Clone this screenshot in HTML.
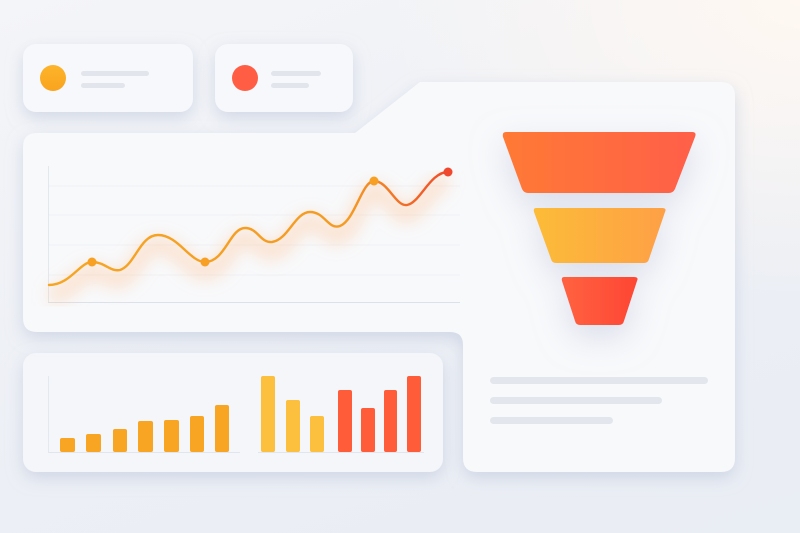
<!DOCTYPE html>
<html><head><style>
html,body{margin:0;padding:0;width:800px;height:533px;overflow:hidden}
body{background:radial-gradient(ellipse 420px 300px at 800px 0px,#fff8f2 0%,rgba(255,248,242,0) 100%),linear-gradient(160deg,#f4f5f8 0%,#eceff5 60%,#e9edf4 100%)}
svg{position:absolute;left:0;top:0}
</style></head><body>
<svg width="800" height="533" viewBox="0 0 800 533">
<defs>
<filter id="sh" x="-20%" y="-20%" width="140%" height="150%"><feDropShadow dx="0" dy="6" stdDeviation="8" flood-color="#b8c3d8" flood-opacity="0.55"/></filter>
<filter id="fs" x="-50%" y="-50%" width="200%" height="200%"><feDropShadow dx="0" dy="12" stdDeviation="16" flood-color="#c8cbe0" flood-opacity="0.6"/></filter>
<filter id="bl"><feGaussianBlur stdDeviation="8"/></filter>
<linearGradient id="lg" x1="0" x2="1"><stop offset="0" stop-color="#f6a623"/><stop offset="0.75" stop-color="#f59a22"/><stop offset="1" stop-color="#f04a2a"/></linearGradient>
<linearGradient id="f1" x1="0" x2="1"><stop offset="0" stop-color="#ff7a35"/><stop offset="1" stop-color="#ff5f48"/></linearGradient>
<linearGradient id="f2" x1="0" x2="1"><stop offset="0" stop-color="#fcbc38"/><stop offset="1" stop-color="#fea046"/></linearGradient>
<linearGradient id="f3" x1="0" x2="1"><stop offset="0" stop-color="#ff6240"/><stop offset="1" stop-color="#fe4634"/></linearGradient>
<linearGradient id="c1" x1="0" y1="0" x2="0" y2="1"><stop offset="0" stop-color="#fdb42b"/><stop offset="1" stop-color="#f9a41e"/></linearGradient>
</defs>
<rect x="23" y="44" width="170" height="68" rx="13" fill="#f7f8fb" filter="url(#sh)"/>
<rect x="215" y="44" width="138" height="68" rx="13" fill="#f7f8fb" filter="url(#sh)"/>
<circle cx="53" cy="78" r="13" fill="url(#c1)"/>
<rect x="81" y="71" width="68" height="5" rx="2.5" fill="#e2e5ec"/>
<rect x="81" y="83" width="44" height="5" rx="2.5" fill="#e2e5ec"/>
<circle cx="245" cy="78" r="13" fill="#ff5e45"/>
<rect x="271" y="71" width="50" height="5" rx="2.5" fill="#e2e5ec"/>
<rect x="271" y="83" width="38" height="5" rx="2.5" fill="#e2e5ec"/>
<rect x="23" y="353" width="420" height="119" rx="13" fill="#f5f6fa" filter="url(#sh)"/>
<path d="M37 133 L355 133 L420 82 L721 82 Q735 82 735 96 L735 458 Q735 472 721 472 L477 472 Q463 472 463 458 L463 345 Q463 332 450 332 L37 332 Q23 332 23 318 L23 147 Q23 133 37 133 Z" fill="#f8f9fb" filter="url(#sh)"/>
<g stroke="#f0f1f5" stroke-width="1">
<line x1="48" y1="186" x2="460" y2="186"/><line x1="48" y1="215" x2="460" y2="215"/><line x1="48" y1="245" x2="460" y2="245"/><line x1="48" y1="275" x2="460" y2="275"/>
</g>
<line x1="48.5" y1="166" x2="48.5" y2="302" stroke="#e4e7ee"/>
<line x1="48" y1="302.5" x2="460" y2="302.5" stroke="#dde1ea"/>
<path d="M49 295 C70 295 80 272 92 272 C105 272 110 282 120 280 C135 275 140 245 158 245 C178 245 190 272 205 272 C225 272 230 238 245 238 C258 238 260 253 272 252 C288 250 295 222 310 222 C325 222 328 240 340 236 C355 230 362 191 374 191 C388 191 396 217 407 215 C420 213 430 182 448 182" fill="none" stroke="#ffb47a" stroke-opacity="0.35" stroke-width="16" filter="url(#bl)"/>
<path d="M49 285 C70 285 80 262 92 262 C105 262 110 272 120 270 C135 265 140 235 158 235 C178 235 190 262 205 262 C225 262 230 228 245 228 C258 228 260 243 272 242 C288 240 295 212 310 212 C325 212 328 230 340 226 C355 220 362 181 374 181 C388 181 396 207 407 205 C420 203 430 172 448 172" fill="none" stroke="url(#lg)" stroke-width="2.4" stroke-linecap="round"/>
<circle cx="92" cy="262" r="4.5" fill="#f7a024"/>
<circle cx="205" cy="262" r="4.5" fill="#f7a024"/>
<circle cx="374" cy="181" r="4.5" fill="#f7a024"/>
<circle cx="448" cy="172" r="4.5" fill="#f0482e"/>
<line x1="48.5" y1="376" x2="48.5" y2="452" stroke="#e5e8ef"/>
<line x1="48" y1="452.5" x2="240" y2="452.5" stroke="#e1e5ee"/>
<line x1="258" y1="452.5" x2="424" y2="452.5" stroke="#e1e5ee"/>
<g fill="#f9a524">
<rect x="60" y="438" width="15" height="14" rx="2"/><rect x="86" y="434" width="15" height="18" rx="2"/><rect x="113" y="429" width="14" height="23" rx="2"/><rect x="138" y="421" width="15" height="31" rx="2"/><rect x="164" y="420" width="15" height="32" rx="2"/><rect x="190" y="416" width="14" height="36" rx="2"/><rect x="215" y="405" width="14" height="47" rx="2"/>
</g>
<g fill="#fcbf3e">
<rect x="261" y="376" width="14" height="76" rx="2"/><rect x="286" y="400" width="14" height="52" rx="2"/><rect x="310" y="416" width="14" height="36" rx="2"/>
</g>
<g fill="#ff5d3a">
<rect x="338" y="390" width="14" height="62" rx="2"/><rect x="361" y="408" width="14" height="44" rx="2"/><rect x="384" y="390" width="13" height="62" rx="2"/><rect x="407" y="376" width="14" height="76" rx="2"/>
</g>
<g filter="url(#fs)">
<path d="M506 132 L692 132 Q697 132 695 137 L675 189 Q673 193 669 193 L528 193 Q524 193 522 189 L503 137 Q502 132 506 132 Z" fill="url(#f1)"/>
<path d="M536 208 L662 208 Q667 208 665 212 L649 259 Q648 263 644 263 L556 263 Q552 263 551 259 L534 212 Q533 208 536 208 Z" fill="url(#f2)"/>
<path d="M564 277 L634 277 Q639 277 637 281 L624 321 Q623 325 619 325 L580 325 Q576 325 575 321 L562 281 Q561 277 564 277 Z" fill="url(#f3)"/>
</g>
<rect x="490" y="377" width="218" height="7" rx="3.5" fill="#e3e6ed"/>
<rect x="490" y="397" width="172" height="7" rx="3.5" fill="#e3e6ed"/>
<rect x="490" y="417" width="123" height="7" rx="3.5" fill="#e3e6ed"/>
</svg>
</body></html>
